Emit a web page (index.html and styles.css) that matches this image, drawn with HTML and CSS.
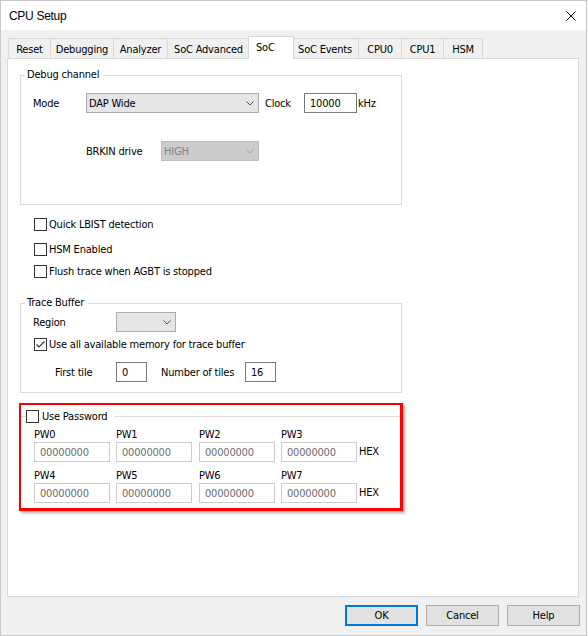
FILE: index.html
```html
<!DOCTYPE html>
<html>
<head>
<meta charset="utf-8">
<title>CPU Setup</title>
<link rel="stylesheet" href="styles.css">
</head>
<body>
<div class="window">
  <div class="titlebar">
    <span class="title">CPU Setup</span>
    <span class="close"><svg width="10" height="10" viewBox="0 0 10 10"><path d="M0.5 0.5 L9.5 9.5 M9.5 0.5 L0.5 9.5" stroke="#000" stroke-width="1" fill="none"/></svg></span>
  </div>
  <div class="tabs">
    <div class="tab first w-reset">Reset</div>
    <div class="tab w-debugging">Debugging</div>
    <div class="tab w-analyzer">Analyzer</div>
    <div class="tab w-socadv">SoC Advanced</div>
    <div class="tab sel">SoC</div>
    <div class="tab w-socev">SoC Events</div>
    <div class="tab w-cpu0">CPU0</div>
    <div class="tab w-cpu1">CPU1</div>
    <div class="tab w-hsm">HSM</div>
  </div>
  <div class="panel">
    <fieldset class="group g-debug">
      <legend>Debug channel</legend>
      <div class="gbody gb-debug">
        <div class="row">
          <span class="l-mode">Mode</span>
          <div class="combo c-mode"><span>DAP Wide</span><svg class="chev" width="8" height="5" viewBox="0 0 8 5"><path d="M0.5 0.5 L4 4 L7.5 0.5" stroke="#555" stroke-width="1" fill="none"/></svg></div>
          <span class="l-clock">Clock</span>
          <div class="edit e-clock">10000</div>
          <span class="l-khz">kHz</span>
        </div>
        <div class="row brkin-row">
          <span class="l-brkin">BRKIN drive</span>
          <div class="combo disabled c-brkin"><span>HIGH</span><svg class="chev" width="8" height="5" viewBox="0 0 8 5"><path d="M0.5 0.5 L4 4 L7.5 0.5" stroke="#a8a8a8" stroke-width="1" fill="none"/></svg></div>
        </div>
      </div>
    </fieldset>

    <div class="check ck1"><span class="cb"></span><span>Quick LBIST detection</span></div>
    <div class="check ck2"><span class="cb"></span><span>HSM Enabled</span></div>
    <div class="check ck3"><span class="cb"></span><span>Flush trace when AGBT is stopped</span></div>

    <fieldset class="group g-trace">
      <legend>Trace Buffer</legend>
      <div class="gbody gb-trace">
        <div class="row">
          <span class="l-region">Region</span>
          <div class="combo c-region"><span></span><svg class="chev" width="8" height="5" viewBox="0 0 8 5"><path d="M0.5 0.5 L4 4 L7.5 0.5" stroke="#555" stroke-width="1" fill="none"/></svg></div>
        </div>
        <div class="check ck-mem"><span class="cb"><svg width="11" height="11" viewBox="0 0 11 11"><path d="M1.5 5.5 L4 8 L9.5 2.5" stroke="#333" stroke-width="1.2" fill="none"/></svg></span><span>Use all available memory for trace buffer</span></div>
        <div class="row tile-row">
          <span class="l-first">First tile</span>
          <div class="edit e-tile">0</div>
          <span class="l-num">Number of tiles</span>
          <div class="edit e-tile">16</div>
        </div>
      </div>
    </fieldset>

    <div class="annot">
      <fieldset class="pwgroup">
        <legend><span class="cb"></span><span>Use Password</span></legend>
        <div class="pwbody">
          <div class="pwrow">
            <div class="pwcell"><div class="pwlbl">PW0</div><div class="edit pw">00000000</div></div>
            <div class="pwcell c2"><div class="pwlbl">PW1</div><div class="edit pw">00000000</div></div>
            <div class="pwcell"><div class="pwlbl">PW2</div><div class="edit pw">00000000</div></div>
            <div class="pwcell c4"><div class="pwlbl">PW3</div><div class="edit pw">00000000</div></div>
            <span class="hex">HEX</span>
          </div>
          <div class="pwrow pwrow2">
            <div class="pwcell"><div class="pwlbl">PW4</div><div class="edit pw">00000000</div></div>
            <div class="pwcell c2"><div class="pwlbl">PW5</div><div class="edit pw">00000000</div></div>
            <div class="pwcell"><div class="pwlbl">PW6</div><div class="edit pw">00000000</div></div>
            <div class="pwcell c4"><div class="pwlbl">PW7</div><div class="edit pw">00000000</div></div>
            <span class="hex">HEX</span>
          </div>
        </div>
      </fieldset>
    </div>
  </div>
  <div class="buttons">
    <div class="btn def">OK</div>
    <div class="btn">Cancel</div>
    <div class="btn">Help</div>
  </div>
</div>
</body>
</html>
```

FILE: styles.css
```css
* { box-sizing: border-box; }
html, body { margin: 0; padding: 0; }
body {
  width: 588px;
  height: 636px;
  background: #f0f0f0;
  font-family: "DejaVu Sans Condensed", "Liberation Sans", sans-serif;
  font-size: 11px;
  letter-spacing: -0.2px;
  color: #000;
  overflow: hidden;
}
.window {
  width: 587px;
  height: 636px;
  border: 1px solid #c8c8c8;
  background: #f0f0f0;
  display: flex;
  flex-direction: column;
}
.titlebar {
  flex: none;
  height: 29px;
  background: #fff;
  display: flex;
  align-items: center;
  justify-content: space-between;
  padding: 0 10px 0 8px;
}
.title {
  font-family: "Liberation Sans", sans-serif;
  font-size: 12px;
  letter-spacing: -0.3px;
}
.close { display: flex; width: 10px; height: 10px; }

.tabs {
  flex: none;
  height: 22px;
  margin-top: 6px;
  padding-left: 7px;
  display: flex;
  align-items: flex-end;
}
.tab {
  flex: none;
  height: 20px;
  border-top: 1px solid #d9d9d9;
  border-right: 1px solid #d9d9d9;
  text-align: center;
  padding-top: 3px;
  line-height: 16px;
  white-space: nowrap;
}
.tab.first { border-left: 1px solid #d9d9d9; }
.tab.sel {
  position: relative;
  z-index: 1;
  width: 46px;
  height: 23px;
  margin: 0 -2px -1px -2px;
  background: #fff;
  border-left: 1px solid #d9d9d9;
  text-align: left;
  padding-left: 7px;
}
.w-reset { width: 43px; }
.w-debugging { width: 63px; }
.w-analyzer { width: 54px; }
.w-socadv { width: 82px; }
.w-socev { width: 67px; }
.w-cpu0 { width: 43px; }
.w-cpu1 { width: 42px; }
.w-hsm { width: 39px; }

.panel {
  flex: none;
  margin-left: 6px;
  width: 572px;
  height: 539px;
  background: #fff;
  border: 1px solid #d9d9d9;
  padding-top: 9px;
}

.group {
  margin: 0 0 0 12px;
  width: 382px;
  border: 1px solid #dcdcdc;
  padding: 0;
  min-inline-size: 0;
}
.group legend {
  margin-left: 4px;
  padding: 0 4px 0 2px;
  line-height: 14px;
}
.gbody { padding-left: 12px; }
.gb-debug { padding-top: 11px; padding-bottom: 43px; }
.gb-trace { padding-top: 2px; padding-bottom: 10px; }
.g-trace { margin-top: 18px; }

.row {
  display: flex;
  align-items: center;
  height: 20px;
  white-space: nowrap;
}
.brkin-row { margin-top: 28px; padding-left: 53px; }
.l-mode { width: 53px; }
.l-clock { width: 39px; margin-left: 6px; }
.l-khz { margin-left: 1px; }
.l-brkin { width: 75px; }
.l-region { width: 83px; }
.tile-row { margin-top: 11px; }
.l-first { width: 61px; margin-left: 22px; }
.l-num { width: 84px; margin-left: 14px; }

.combo {
  height: 20px;
  border: 1px solid #adadad;
  background: #e5e5e5;
  display: flex;
  align-items: center;
  justify-content: space-between;
  padding: 0 4px 0 2px;
}
.combo.disabled {
  background: #cccccc;
  border-color: #bfbfbf;
  color: #838383;
}
.chev { display: block; flex: none; }
.c-mode { width: 173px; }
.c-brkin { width: 98px; }
.c-region { width: 60px; }

.edit {
  height: 20px;
  border: 1px solid #7a7a7a;
  background: #fff;
  padding-left: 5px;
  display: flex;
  align-items: center;
  white-space: nowrap;
}
.e-clock { width: 53px; }
.e-tile { width: 31px; }

.check {
  display: flex;
  align-items: center;
  height: 13px;
  line-height: 13px;
  white-space: nowrap;
  margin-left: 26px;
}
.cb {
  flex: none;
  width: 13px;
  height: 13px;
  border: 1px solid #333;
  background: #fff;
  margin-right: 2px;
  display: flex;
}
.ck1 { margin-top: 13px; }
.ck2 { margin-top: 12px; }
.ck3 { margin-top: 9px; }
.ck-mem { margin-top: 6px; margin-left: 1px; }

.annot {
  margin: 10px 0 0 11px;
  width: 384px;
  border-style: solid;
  border-color: #ff0000;
  border-width: 2px 3px 3px 2px;
  box-shadow: 2px 2px 3px rgba(0, 0, 0, 0.35);
  padding: 5px 0 5px 0;
}
.pwgroup {
  margin: 0;
  padding: 0;
  border: none;
  border-top: 1px solid #dcdcdc;
  min-inline-size: 0;
}
.pwgroup legend {
  margin-left: 5px;
  padding: 0 7px 0 0;
  height: 13px;
  line-height: 13px;
  display: flex;
  align-items: center;
  white-space: nowrap;
}
.pwgroup legend .cb { margin-right: 3px; }
.pwbody { padding: 5px 0 0 13px; }
.pwrow { display: flex; align-items: flex-end; }
.pwrow2 { margin-top: 7px; }
.pwcell { margin-right: 6px; }
.pwcell.c2 { margin-right: 7px; }
.pwcell.c4 { margin-right: 2px; }
.pwlbl { line-height: 13px; margin-bottom: 1px; }
.edit.pw {
  width: 76px;
  border-color: #cccccc;
  color: #6d6d6d;
}
.hex { height: 20px; line-height: 20px; }

.buttons {
  flex: none;
  display: flex;
  justify-content: flex-end;
  gap: 8px;
  margin-top: 8px;
  padding-right: 6px;
}
.btn {
  width: 73px;
  height: 21px;
  border: 1px solid #adadad;
  background: #e1e1e1;
  display: flex;
  align-items: center;
  justify-content: center;
}
.btn.def { border: 2px solid #0078d7; }
```
